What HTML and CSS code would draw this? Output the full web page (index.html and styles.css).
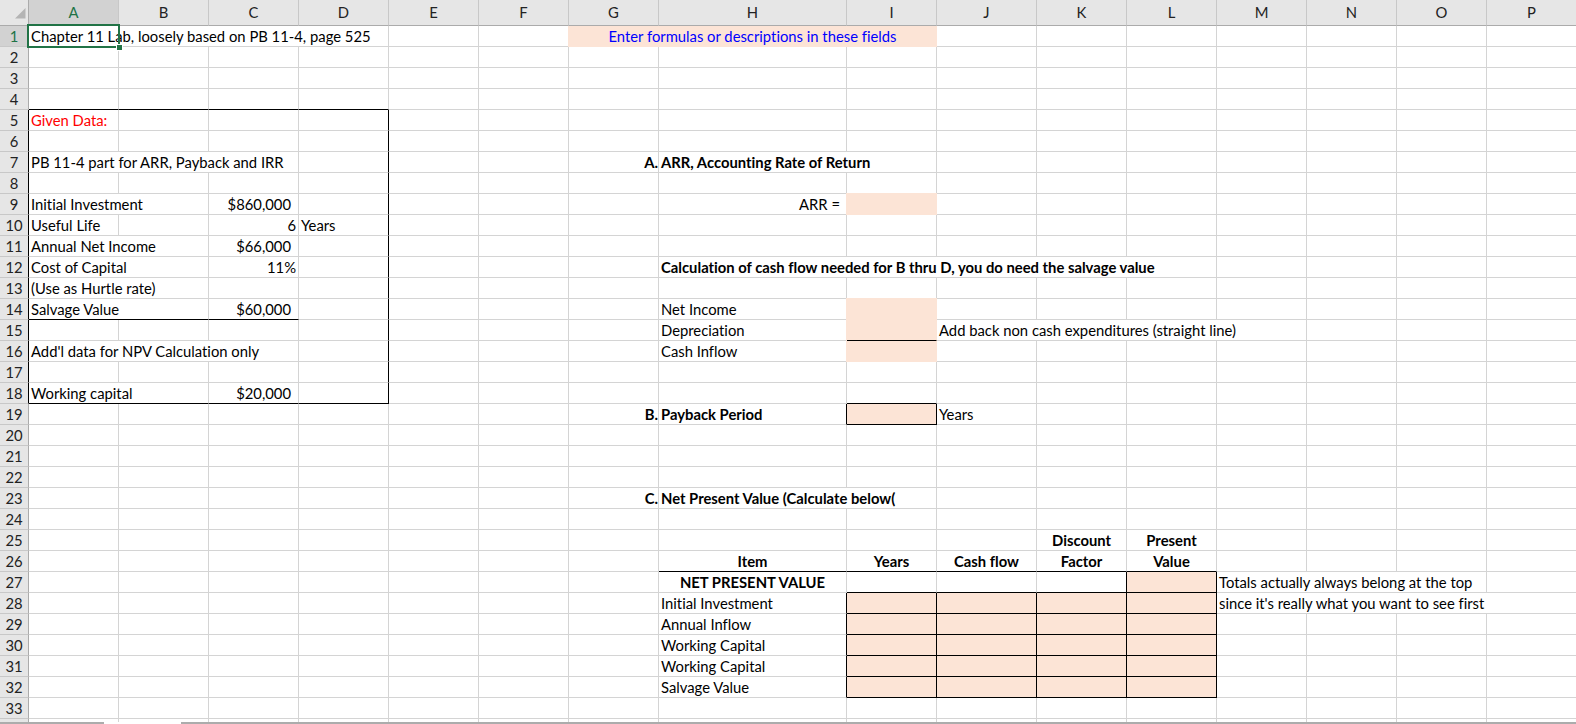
FILE: index.html
```html
<!DOCTYPE html>
<html>
<head>
<meta charset="utf-8">
<link rel="stylesheet" href="styles.css">
</head>
<body>
<div class="sheet">
<div class="r hdr">
<i class="corner"><svg width="28" height="25" viewBox="0 0 28 25"><polygon points="25.5,8 25.5,18.5 15,18.5" fill="#b4b4b4"/></svg></i>
<i class="sel">A</i><i>B</i><i>C</i><i>D</i><i>E</i><i>F</i><i>G</i><i>H</i><i>I</i><i>J</i><i>K</i><i>L</i><i>M</i><i>N</i><i>O</i><i>P</i>
</div>
<div class="r"><i class="h sel">1</i><i class="s4">Chapter 11 Lab, loosely based on PB 11-4, page 525</i><i></i><i></i><i class="s3 pf pl ct blue">Enter formulas or descriptions in these fields</i><i></i><i></i><i></i><i></i><i></i><i></i><i></i></div>
<div class="r"><i class="h">2</i><i></i><i></i><i></i><i></i><i></i><i></i><i></i><i></i><i></i><i></i><i></i><i></i><i></i><i></i><i></i><i></i></div>
<div class="r"><i class="h">3</i><i></i><i></i><i></i><i></i><i></i><i></i><i></i><i></i><i></i><i></i><i></i><i></i><i></i><i></i><i></i><i></i></div>
<div class="r"><i class="h">4</i><i class="bB"></i><i class="bB"></i><i class="bB"></i><i class="bB"></i><i></i><i></i><i></i><i></i><i></i><i></i><i></i><i></i><i></i><i></i><i></i><i></i></div>
<div class="r"><i class="h bR">5</i><i class="red">Given Data:</i><i></i><i></i><i class="bR"></i><i></i><i></i><i></i><i></i><i></i><i></i><i></i><i></i><i></i><i></i><i></i><i></i></div>
<div class="r"><i class="h bR">6</i><i></i><i></i><i></i><i class="bR"></i><i></i><i></i><i></i><i></i><i></i><i></i><i></i><i></i><i></i><i></i><i></i><i></i></div>
<div class="r"><i class="h bR">7</i><i class="s3">PB 11-4 part for ARR, Payback and IRR</i><i class="bR"></i><i></i><i></i><i class="rt bd p0">A.</i><i class="s2 bd">ARR, Accounting Rate of Return</i><i></i><i></i><i></i><i></i><i></i><i></i><i></i></div>
<div class="r"><i class="h bR">8</i><i></i><i></i><i></i><i class="bR"></i><i></i><i></i><i></i><i></i><i></i><i></i><i></i><i></i><i></i><i></i><i></i><i></i></div>
<div class="r"><i class="h bR">9</i><i class="s2">Initial Investment</i><i class="rt cur">$860,000</i><i class="bR"></i><i></i><i></i><i></i><i class="rt p6">ARR =</i><i class="pf plt"></i><i></i><i></i><i></i><i></i><i></i><i></i><i></i></div>
<div class="r"><i class="h bR">10</i><i>Useful Life</i><i></i><i class="rt">6</i><i class="bR">Years</i><i></i><i></i><i></i><i></i><i></i><i></i><i></i><i></i><i></i><i></i><i></i><i></i></div>
<div class="r"><i class="h bR">11</i><i class="s2">Annual Net Income</i><i class="rt cur">$66,000</i><i class="bR"></i><i></i><i></i><i></i><i></i><i></i><i></i><i></i><i></i><i></i><i></i><i></i><i></i></div>
<div class="r"><i class="h bR">12</i><i class="s2">Cost of Capital</i><i class="rt">11%</i><i class="bR"></i><i></i><i></i><i></i><i class="s5 bd">Calculation of cash flow needed for B thru D, you do need the salvage value</i><i></i><i></i><i></i><i></i></div>
<div class="r"><i class="h bR">13</i><i class="s2">(Use as Hurtle rate)</i><i></i><i class="bR"></i><i></i><i></i><i></i><i></i><i></i><i></i><i></i><i></i><i></i><i></i><i></i><i></i></div>
<div class="r"><i class="h bR">14</i><i class="s2 bB">Salvage Value</i><i class="rt cur bB">$60,000</i><i class="bR"></i><i></i><i></i><i></i><i>Net Income</i><i class="pf plt"></i><i></i><i></i><i></i><i></i><i></i><i></i><i></i></div>
<div class="r"><i class="h bR">15</i><i></i><i></i><i></i><i class="bR"></i><i></i><i></i><i></i><i>Depreciation</i><i class="pf pl bB"></i><i class="s4">Add back non cash expenditures (straight line)</i><i></i><i></i><i></i></div>
<div class="r"><i class="h bR">16</i><i class="s3">Add'l data for NPV Calculation only</i><i class="bR"></i><i></i><i></i><i></i><i>Cash Inflow</i><i class="pf pl"></i><i></i><i></i><i></i><i></i><i></i><i></i><i></i></div>
<div class="r"><i class="h bR">17</i><i></i><i></i><i></i><i class="bR"></i><i></i><i></i><i></i><i></i><i></i><i></i><i></i><i></i><i></i><i></i><i></i><i></i></div>
<div class="r"><i class="h bR">18</i><i class="s2 bB">Working capital</i><i class="rt cur bB">$20,000</i><i class="bR bB"></i><i></i><i></i><i></i><i></i><i class="bB"></i><i></i><i></i><i></i><i></i><i></i><i></i><i></i></div>
<div class="r"><i class="h">19</i><i></i><i></i><i></i><i></i><i></i><i></i><i class="rt bd p0">B.</i><i class="bd bR">Payback Period</i><i class="pf bR bB"></i><i>Years</i><i></i><i></i><i></i><i></i><i></i><i></i></div>
<div class="r"><i class="h">20</i><i></i><i></i><i></i><i></i><i></i><i></i><i></i><i></i><i></i><i></i><i></i><i></i><i></i><i></i><i></i><i></i></div>
<div class="r"><i class="h">21</i><i></i><i></i><i></i><i></i><i></i><i></i><i></i><i></i><i></i><i></i><i></i><i></i><i></i><i></i><i></i><i></i></div>
<div class="r"><i class="h">22</i><i></i><i></i><i></i><i></i><i></i><i></i><i></i><i></i><i></i><i></i><i></i><i></i><i></i><i></i><i></i><i></i></div>
<div class="r"><i class="h">23</i><i></i><i></i><i></i><i></i><i></i><i></i><i class="rt bd p0">C.</i><i class="s2 bd">Net Present Value (Calculate below(</i><i></i><i></i><i></i><i></i><i></i><i></i><i></i></div>
<div class="r"><i class="h">24</i><i></i><i></i><i></i><i></i><i></i><i></i><i></i><i></i><i></i><i></i><i></i><i></i><i></i><i></i><i></i><i></i></div>
<div class="r"><i class="h">25</i><i></i><i></i><i></i><i></i><i></i><i></i><i></i><i></i><i></i><i></i><i class="ct bd">Discount</i><i class="ct bd">Present</i><i></i><i></i><i></i><i></i></div>
<div class="r"><i class="h">26</i><i></i><i></i><i></i><i></i><i></i><i></i><i></i><i class="ct bd bB">Item</i><i class="ct bd bB">Years</i><i class="ct bd bB">Cash flow</i><i class="ct bd bB">Factor</i><i class="ct bd bB">Value</i><i></i><i></i><i></i><i></i></div>
<div class="r"><i class="h">27</i><i></i><i></i><i></i><i></i><i></i><i></i><i></i><i class="ct bd">NET PRESENT VALUE</i><i class="bB"></i><i class="bB"></i><i class="bR bB"></i><i class="pf bR bB"></i><i class="s3">Totals actually always belong at the top</i><i></i></div>
<div class="r"><i class="h">28</i><i></i><i></i><i></i><i></i><i></i><i></i><i></i><i class="bR">Initial Investment</i><i class="pf bR bB"></i><i class="pf bR bB"></i><i class="pf bR bB"></i><i class="pf bR bB"></i><i class="s4">since it's really what you want to see first</i></div>
<div class="r"><i class="h">29</i><i></i><i></i><i></i><i></i><i></i><i></i><i></i><i class="bR">Annual Inflow</i><i class="pf bR bB"></i><i class="pf bR bB"></i><i class="pf bR bB"></i><i class="pf bR bB"></i><i></i><i></i><i></i><i></i></div>
<div class="r"><i class="h">30</i><i></i><i></i><i></i><i></i><i></i><i></i><i></i><i class="bR">Working Capital</i><i class="pf bR bB"></i><i class="pf bR bB"></i><i class="pf bR bB"></i><i class="pf bR bB"></i><i></i><i></i><i></i><i></i></div>
<div class="r"><i class="h">31</i><i></i><i></i><i></i><i></i><i></i><i></i><i></i><i class="bR">Working Capital</i><i class="pf bR bB"></i><i class="pf bR bB"></i><i class="pf bR bB"></i><i class="pf bR bB"></i><i></i><i></i><i></i><i></i></div>
<div class="r"><i class="h">32</i><i></i><i></i><i></i><i></i><i></i><i></i><i></i><i class="bR">Salvage Value</i><i class="pf bR bB"></i><i class="pf bR bB"></i><i class="pf bR bB"></i><i class="pf bR bB"></i><i></i><i></i><i></i><i></i></div>
<div class="r"><i class="h">33</i><i></i><i></i><i></i><i></i><i></i><i></i><i></i><i></i><i></i><i></i><i></i><i></i><i></i><i></i><i></i><i></i></div>
<div class="r stub"><i class="h"></i><i></i><i></i><i></i><i></i><i></i><i></i><i></i><i></i><i></i><i></i><i></i><i></i><i></i><i></i><i></i><i></i></div>
<div class="tabs"><span class="tb1"></span><span class="tb2"></span><span class="tb3"></span></div>
<div class="selbox"><span class="handle"></span></div>
</div>
</body>
</html>
```
FILE: styles.css
```css
* { box-sizing: border-box; margin: 0; padding: 0; }
html, body { width: 1576px; height: 724px; overflow: hidden; background: #ffffff; }
body {
  font-family: Lato, "Liberation Sans", sans-serif;
  font-size: 14.8px;
  color: #000000;
  font-variant-ligatures: none;
}
.sheet { position: relative; width: 1577px; }
.r {
  display: grid;
  grid-template-columns: 29px repeat(7, 90px) 188px 90px 100px repeat(6, 90px);
  height: 21px;
}
.r > * {
  display: block;
  height: 21px;
  line-height: 20px;
  padding: 0 2px;
  white-space: nowrap;
  font-style: normal;
  font-weight: 400;
  overflow: visible;
  border-right: 1px solid #d4d4d4;
  border-bottom: 1px solid #d4d4d4;
}
.hdr { height: 26px; }
.hdr > * {
  height: 26px;
  line-height: 25px;
  background: #e6e6e6;
  text-align: center;
  color: #222222;
  border-right-color: #c8c8c8;
  border-bottom-color: #ababab;
}
.hdr > .corner { padding: 0; border-right-color: #ababab; }
.corner svg { display: block; }
.h {
  background: #e6e6e6;
  text-align: center;
  color: #222222;
  border-right-color: #ababab;
  border-bottom-color: #c8c8c8;
}
.r > .sel { background: #d2d2d2; color: #217346; }
.s2 { grid-column: span 2; }
.s3 { grid-column: span 3; }
.s4 { grid-column: span 4; }
.s5 { grid-column: span 5; }
.rt { text-align: right; }
.ct { text-align: center; }
.cur { padding-right: 7px; }
.p6 { padding-right: 6px; }
.p0 { padding-right: 0; }
.r > .bd { font-weight: 700; }
.red { color: #ff0000; }
.blue { color: #0000ff; }
.pf { background: #fce4d6; border-right-color: #fce4d6; border-bottom-color: #fce4d6; }
.pl { box-shadow: -1px 0 0 #fce4d6; }
.plt { box-shadow: -1px 0 0 #fce4d6, 0 -1px 0 #fce4d6, -1px -1px 0 #fce4d6; }
.r > .bR { border-right-color: #000000; }
.r > .bB { border-bottom-color: #000000; }
.stub { height: 3px; }
.stub > * { height: 3px; border-bottom: none; }
.tabs { display: flex; height: 3px; }
.tb1 { width: 104px; border-top: 2px solid #acacac; }
.tb2 { width: 77px; }
.tb3 { flex: 1; border-top: 2px solid #acacac; }
.selbox {
  position: absolute;
  left: 27px;
  top: 24px;
  width: 93px;
  height: 24px;
  border: 2px solid #217346;
}
.handle {
  position: absolute;
  right: -5px;
  bottom: -5px;
  width: 7px;
  height: 7px;
  background: #217346;
  border: 1px solid #ffffff;
}
```
